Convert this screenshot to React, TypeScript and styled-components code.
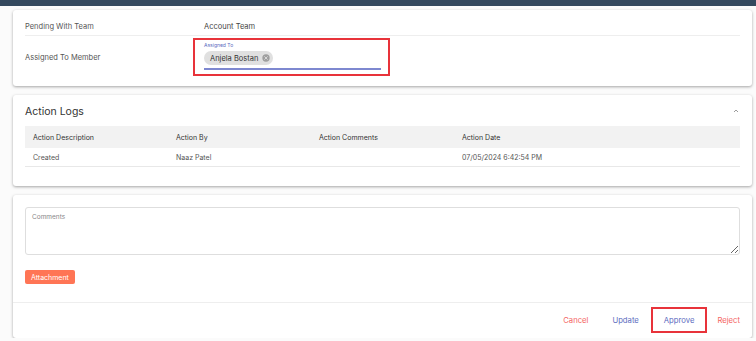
import React from 'react';
import styled, { createGlobalStyle } from 'styled-components';

// 기본 스타일
const GlobalStyle = createGlobalStyle`
  body {
    margin: 0;
    background: #fbfbfb;
    font-family: 'Inter', 'Noto Sans', sans-serif;
    color: #444;
  }
`;

interface LogRow {
  description: string;
  by: string;
  comments: string;
  date: string;
}

const logs: LogRow[] = [
  { description: 'Created', by: 'Naaz Patel', comments: '', date: '07/05/2024 6:42:54 PM' },
];

const TopBar = styled.div`
  height: 6px;
  background: #34495e;
`;

const Page = styled.div`
  display: flex;
  flex-direction: column;
  gap: 9px;
  padding: 4px 4px 0 13px;
`;

const Card = styled.div`
  width: 739px;
  background: #fff;
  border-radius: 3px;
  box-shadow: 0 1px 3px rgba(0, 0, 0, 0.35);
  box-sizing: border-box;
`;

const InfoCard = styled(Card)`
  padding: 8px 12px;
`;

const InfoRow = styled.div<{ $tall?: boolean; $divider?: boolean }>`
  display: flex;
  align-items: center;
  box-sizing: border-box;
  height: ${(p) => (p.$tall ? '42px' : '18px')};
  border-bottom: ${(p) => (p.$divider ? '1px solid #eeeeee' : 'none')};
  font-size: 7.5px;
`;

const Label = styled.div`
  width: 168px;
  color: #555;
`;

const Value = styled.div<{ $indent?: boolean }>`
  padding-left: ${(p) => (p.$indent ? '11px' : '0')};
  color: #444;
`;

const Highlight = styled.div`
  width: 197px;
  height: 38px;
  box-sizing: border-box;
  border: 2px solid #e8333a;
  padding: 2px 7px 0 9px;
`;

const FieldLabel = styled.div`
  font-size: 5px;
  color: #5c6bc0;
  height: 7px;
  line-height: 7px;
`;

const FieldInput = styled.div`
  border-bottom: 2px solid #7e88d0;
  padding: 2px 0 3px 0;
`;

const Chip = styled.span`
  display: inline-flex;
  align-items: center;
  gap: 4px;
  height: 14px;
  padding: 0 3px 0 6px;
  border-radius: 7px;
  background: #e0e0e0;
  font-size: 7.5px;
  color: #333;
`;

const ChipClose = styled.span`
  display: inline-flex;
  width: 8px;
  height: 8px;
`;

const LogCard = styled(Card)`
  padding: 9px 12px 19px;
`;

const LogHeader = styled.div`
  display: flex;
  align-items: center;
  justify-content: space-between;
  height: 14px;
  margin-bottom: 8px;
`;

const LogTitle = styled.div`
  font-size: 10.5px;
  color: #333;
`;

const Chevron = styled.span`
  display: inline-flex;
`;

const Table = styled.div`
  display: flex;
  flex-direction: column;
`;

const TableRow = styled.div<{ $head?: boolean }>`
  display: grid;
  grid-template-columns: repeat(5, 143px);
  box-sizing: border-box;
  height: ${(p) => (p.$head ? '22px' : '19px')};
  align-items: center;
  background: ${(p) => (p.$head ? '#f2f2f2' : 'transparent')};
  border-bottom: ${(p) => (p.$head ? 'none' : '1px solid #e8e8e8')};
  font-size: 7px;
  color: ${(p) => (p.$head ? '#333' : '#555')};
`;

const Cell = styled.div`
  padding-left: 8px;
`;

const FormCard = styled(Card)`
  height: 143px;
  display: flex;
  flex-direction: column;
`;

const FormBody = styled.div`
  padding: 12px 12px 18px;
  border-bottom: 1px solid #eeeeee;
  display: flex;
  flex-direction: column;
  align-items: flex-start;
  gap: 15px;
`;

const Comments = styled.textarea`
  display: block;
  width: 715px;
  height: 48px;
  box-sizing: border-box;
  border: 1px solid #dedede;
  border-radius: 3px;
  padding: 5px 6px;
  font-family: 'Inter', 'Noto Sans', sans-serif;
  font-size: 6.5px;
  color: #444;
  resize: vertical;
  outline: none;
  &::placeholder {
    color: #888;
  }
`;

const AttachButton = styled.button`
  height: 14px;
  padding: 0 6px;
  border: none;
  border-radius: 2px;
  background: #ff7555;
  color: #fff;
  font-family: 'Inter', 'Noto Sans', sans-serif;
  font-size: 7px;
`;

const Footer = styled.div`
  flex: 1;
  display: flex;
  align-items: center;
  justify-content: flex-end;
  gap: 4px;
  padding: 0 4px 1px 0;
`;

const ActionButton = styled.button<{ $tone: 'red' | 'blue'; $marked?: boolean }>`
  background: none;
  font-family: 'Inter', 'Noto Sans', sans-serif;
  font-size: 7.7px;
  color: ${(p) => (p.$tone === 'red' ? '#f4645f' : '#5c6bc0')};
  border: ${(p) => (p.$marked ? '2px solid #e8333a' : '2px solid transparent')};
  height: 26px;
  padding: 0 ${(p) => (p.$marked ? '11px' : '6px')};
  &:first-child {
    margin-right: 4px;
  }
  &:nth-child(3) {
    margin-right: -2px;
  }
`;

const App: React.FC = () => {
  return (
    <>
      <GlobalStyle />
      <TopBar />
      <Page>
        <InfoCard>
          <InfoRow $divider>
            <Label>Pending With Team</Label>
            <Value $indent>Account Team</Value>
          </InfoRow>
          <InfoRow $tall>
            <Label>Assigned To Member</Label>
            <Highlight>
              <FieldLabel>Assigned To</FieldLabel>
              <FieldInput>
                <Chip>
                  Anjela Bostan
                  <ChipClose>
                    <svg width="8" height="8" viewBox="0 0 24 24">
                      <circle cx="12" cy="12" r="11" fill="#9e9e9e" />
                      <path d="M8 8l8 8M16 8l-8 8" stroke="#e0e0e0" strokeWidth="2.6" strokeLinecap="round" />
                    </svg>
                  </ChipClose>
                </Chip>
              </FieldInput>
            </Highlight>
          </InfoRow>
        </InfoCard>

        <LogCard>
          <LogHeader>
            <LogTitle>Action Logs</LogTitle>
            <Chevron>
              <svg width="8" height="8" viewBox="0 0 24 24">
                <path d="M6 15l6-6 6 6" fill="none" stroke="#888" strokeWidth="2.5" />
              </svg>
            </Chevron>
          </LogHeader>
          <Table>
            <TableRow $head>
              <Cell>Action Description</Cell>
              <Cell>Action By</Cell>
              <Cell>Action Comments</Cell>
              <Cell>Action Date</Cell>
              <Cell />
            </TableRow>
            {logs.map((log) => (
              <TableRow key={log.date}>
                <Cell>{log.description}</Cell>
                <Cell>{log.by}</Cell>
                <Cell>{log.comments}</Cell>
                <Cell>{log.date}</Cell>
                <Cell />
              </TableRow>
            ))}
          </Table>
        </LogCard>

        <FormCard>
          <FormBody>
            <Comments placeholder="Comments" />
            <AttachButton>Attachment</AttachButton>
          </FormBody>
          <Footer>
            <ActionButton $tone="red">Cancel</ActionButton>
            <ActionButton $tone="blue">Update</ActionButton>
            <ActionButton $tone="blue" $marked>Approve</ActionButton>
            <ActionButton $tone="red">Reject</ActionButton>
          </Footer>
        </FormCard>
      </Page>
    </>
  );
};

export default App;
